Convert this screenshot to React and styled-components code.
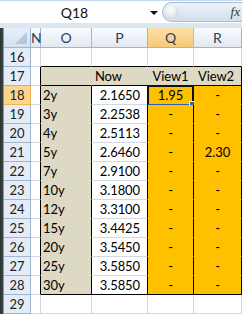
import React from "react";
import styled, { createGlobalStyle } from "styled-components";

const GRID = "#d0d7e5";
const HEAD_LINE = "#9eb6ce";
const TAN = "#ddd9c4";
const ORANGE = "#ffc000";
const INK = "#000";

const GlobalStyle = createGlobalStyle`
  html, body {
    margin: 0;
    padding: 0;
    background: #fff;
    overflow: hidden;
  }
  body {
    font-family: Lato, "Liberation Sans", sans-serif;
  }
`;

const Window = styled.div`
  width: 242px;
  height: 314px;
  overflow: hidden;
  display: flex;
  flex-direction: column;
  background: #fff;
`;

const FormulaBar = styled.div`
  flex: none;
  height: 28px;
  box-sizing: border-box;
  border-top: 1px solid #c5d6ec;
  background: #dbe6f3;
`;

const FormulaRow = styled.div`
  height: 22px;
  display: flex;
  align-items: center;
  background: #fff;
`;

const NameBox = styled.div`
  width: 149px;
  text-align: center;
  font-size: 14px;
  color: #111;
`;

const DropArrow = styled.div`
  width: 0;
  height: 0;
  margin: 1px 0 0 1px;
  border-left: 4px solid transparent;
  border-right: 4px solid transparent;
  border-top: 4px solid #111;
`;

const Pill = styled.div`
  flex: 1;
  margin-left: 4px;
  height: 20px;
  box-sizing: border-box;
  display: flex;
  align-items: center;
  border: 1px solid #a8bbd3;
  border-right: none;
  border-radius: 10px 0 0 10px;
  background: linear-gradient(#eef3f9, #d3deec);
`;

const Knob = styled.div`
  width: 14px;
  height: 14px;
  margin-left: 2px;
  border-radius: 50%;
  background: radial-gradient(circle at 40% 35%, #ffffff 0, #e6ebf1 45%, #b9c3cf 100%);
`;

const Fx = styled.span`
  margin-left: auto;
  margin-right: 2px;
  font-family: "Liberation Serif", serif;
  font-style: italic;
  font-size: 13px;
  color: #333;
`;

const Sheet = styled.div`
  flex: 1;
  display: flex;
  min-height: 0;
`;

const Edge = styled.div`
  width: 4px;
  flex: none;
  background: linear-gradient(to right, #2c3534 0, #3a4443 3px, #8d949a 3px);
`;

const Grid = styled.div`
  flex: 1;
  display: grid;
  grid-template-columns: 27px 10px 51px 56px 46px 48px 1fr;
  grid-template-rows: 20px;
  grid-auto-rows: 19px;
  overflow: hidden;
`;

const Corner = styled.div`
  box-sizing: border-box;
  position: relative;
  border-right: 1px solid ${HEAD_LINE};
  border-bottom: 1px solid ${HEAD_LINE};
  background: linear-gradient(#e6eef8, #d6e2f0);
`;

const CornerMark = styled.div`
  position: absolute;
  right: 3px;
  bottom: 3px;
  width: 0;
  height: 0;
  border-left: 12px solid transparent;
  border-bottom: 12px solid #b5c7dc;
`;

const ColHead = styled.div`
  box-sizing: border-box;
  border-right: 1px solid ${(p) => (p.$active ? "#f2b44d" : HEAD_LINE)};
  border-bottom: 1px solid ${(p) => (p.$active ? "#f2a93a" : HEAD_LINE)};
  background: ${(p) =>
    p.$active
      ? "linear-gradient(#fbe0a8, #f8c978)"
      : "linear-gradient(#f9fbfd, #e1e8f2)"};
  font-size: 14px;
  line-height: 19px;
  text-align: center;
  color: #27415f;
  overflow: visible;
  white-space: nowrap;
`;

const RowHead = styled.div`
  box-sizing: border-box;
  border-right: 1px solid ${(p) => (p.$active ? "#f2b44d" : HEAD_LINE)};
  border-bottom: 1px solid ${(p) => (p.$active ? "#f2b44d" : HEAD_LINE)};
  background: ${(p) => (p.$active ? "#fbd490" : "#e4ecf7")};
  font-size: 13px;
  line-height: 18px;
  text-align: center;
  color: #222;
`;

const Cell = styled.div`
  box-sizing: border-box;
  position: relative;
  border-right: 1px solid ${(p) => p.$r || GRID};
  border-bottom: 1px solid ${(p) => p.$b || GRID};
  background: ${(p) => p.$bg || "#fff"};
  font-size: 13px;
  letter-spacing: -0.1px;
  line-height: 18px;
  color: #000;
  text-align: ${(p) => p.$align || "left"};
  padding: 0 ${(p) => p.$padR ?? 2}px 0 ${(p) => p.$padL ?? 2}px;
  white-space: nowrap;
`;

const Selection = styled.div`
  position: absolute;
  left: -1px;
  top: -1px;
  right: -1px;
  bottom: -2px;
  border: 2px solid #111;
  border-bottom-color: #2c5fb5;
  pointer-events: none;
`;

const Handle = styled.div`
  position: absolute;
  right: -4px;
  bottom: -4px;
  width: 5px;
  height: 5px;
  background: #2c5fb5;
  border: 1px solid #fff;
`;

const COLS = ["N", "O", "P", "Q", "R", ""];

const DATA = [
  ["2y", "2.1650", "1.95", "-"],
  ["3y", "2.2538", "-", "-"],
  ["4y", "2.5113", "-", "-"],
  ["5y", "2.6460", "-", "2.30"],
  ["7y", "2.9100", "-", "-"],
  ["10y", "3.1800", "-", "-"],
  ["12y", "3.3100", "-", "-"],
  ["15y", "3.4425", "-", "-"],
  ["20y", "3.5450", "-", "-"],
  ["25y", "3.5850", "-", "-"],
  ["30y", "3.5850", "-", "-"],
];

const inTable = (r) => r >= 17 && r <= 28;

const renderRow = (r) => {
  const cells = [];
  const key = (c) => `${r}-${c}`;
  cells.push(
    <RowHead key={key("h")} $active={r === 18}>
      {r}
    </RowHead>
  );
  cells.push(<Cell key={key("N")} $r={inTable(r) ? INK : GRID} />);

  if (r === 16) {
    ["O", "P", "Q", "R"].forEach((c) => cells.push(<Cell key={key(c)} $b={INK} />));
  } else if (r === 17) {
    cells.push(<Cell key={key("O")} $bg={TAN} $r={TAN} $b={INK} />);
    cells.push(
      <Cell key={key("P")} $bg={TAN} $r={TAN} $b={INK} $padL={3}>
        Now
      </Cell>
    );
    cells.push(
      <Cell key={key("Q")} $bg={TAN} $r={TAN} $b={INK} $align="center">
        View1
      </Cell>
    );
    cells.push(
      <Cell key={key("R")} $bg={TAN} $r={INK} $b={INK} $align="center" $padR={5}>
        View2
      </Cell>
    );
  } else if (inTable(r)) {
    const [label, now, v1, v2] = DATA[r - 18];
    const last = r === 28;
    cells.push(
      <Cell key={key("O")} $bg={TAN} $r={INK} $b={last ? INK : TAN}>
        {label}
      </Cell>
    );
    cells.push(
      <Cell key={key("P")} $r={INK} $b={last ? INK : GRID} $align="right" $padR={7}>
        {now}
      </Cell>
    );
    cells.push(
      <Cell key={key("Q")} $bg={ORANGE} $r={INK} $b={last ? INK : ORANGE} $align="center">
        {v1}
        {r === 18 && (
          <Selection>
            <Handle />
          </Selection>
        )}
      </Cell>
    );
    cells.push(
      <Cell key={key("R")} $bg={ORANGE} $r={INK} $b={last ? INK : ORANGE} $align="center">
        {v2}
      </Cell>
    );
  } else {
    ["O", "P", "Q", "R"].forEach((c) => cells.push(<Cell key={key(c)} />));
  }
  cells.push(<Cell key={key("S")} />);
  return cells;
};

const rows = [];
for (let r = 16; r <= 29; r++) rows.push(r);

export default function App() {
  return (
    <Window>
      <GlobalStyle />
      <FormulaBar>
        <FormulaRow>
          <NameBox>Q18</NameBox>
          <DropArrow />
          <Pill>
            <Knob />
            <Fx>fx</Fx>
          </Pill>
        </FormulaRow>
      </FormulaBar>
      <Sheet>
        <Edge />
        <Grid>
          <Corner>
            <CornerMark />
          </Corner>
          {COLS.map((c) => (
            <ColHead key={c || "S"} $active={c === "Q"}>
              {c}
            </ColHead>
          ))}
          {rows.map(renderRow)}
        </Grid>
      </Sheet>
    </Window>
  );
}
